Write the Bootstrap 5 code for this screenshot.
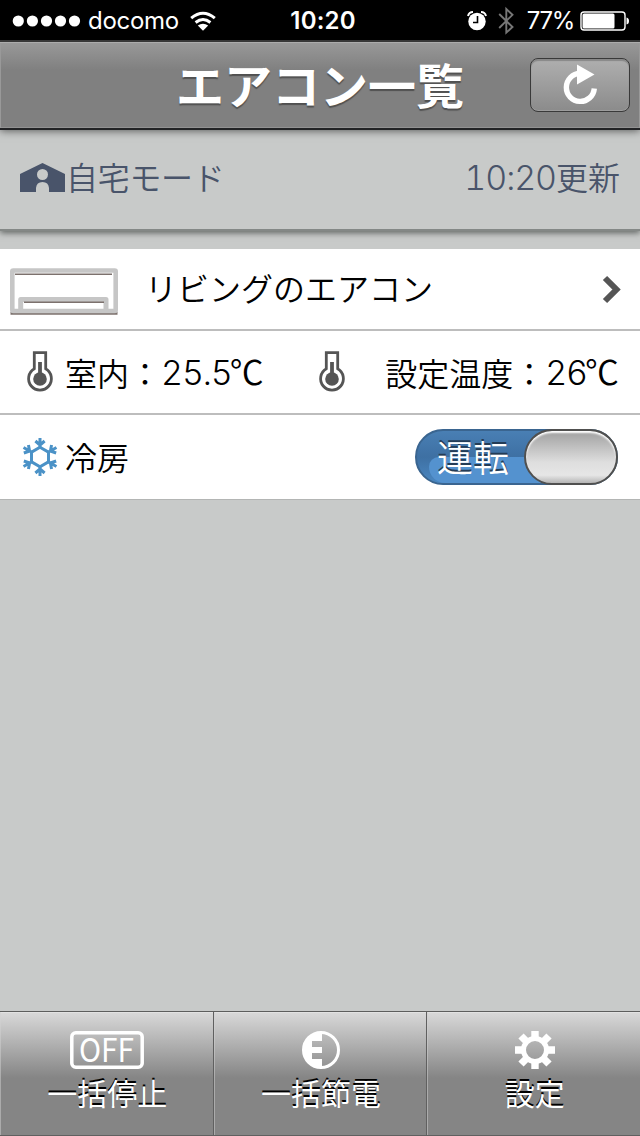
<!DOCTYPE html>
<html lang="ja">
<head>
<meta charset="utf-8">
<meta name="viewport" content="width=device-width, initial-scale=1">
<title>エアコン一覧</title>
<link href="https://cdn.jsdelivr.net/npm/bootstrap@5.3.0/dist/css/bootstrap.min.css" rel="stylesheet">
<style>
body{font-family:"Noto Sans CJK JP",sans-serif;font-size:32px;line-height:1;font-weight:350;background:#c8cac9;color:#000;height:1136px;overflow:hidden}
svg{display:block;flex:none;overflow:visible}
.status{height:40px;background:#000;color:#fff;font-family:Inter,sans-serif;font-size:24px;font-weight:400;display:grid;grid-template-columns:1fr auto 1fr;padding:1px 11px 0 12px}
.clock{font-weight:600;letter-spacing:.2px;padding-left:5px}
.titlebar{height:90px;border-top:2px solid #373737;border-bottom:2px solid #222325;background:linear-gradient(#999,#808080 28px);box-shadow:inset 0 1px #acacac,inset 1px 0 #999,inset -1px 0 #999,inset 0 -1px #929292,0 1px 8px rgba(0,0,0,.55);color:#fff;display:grid;grid-template-columns:110px 1fr 110px;position:relative}
.titlebar h1{font-size:48px;font-weight:700;line-height:1;text-shadow:0 2px 1px #505050;white-space:nowrap;padding-bottom:5px}
.reload{width:100px;height:54px;border:1px solid #393939;border-radius:8px;background:linear-gradient(#afafaf,#8b8b8b);box-shadow:inset 0 2px 1px #888,inset 0 -1px #9c9c9c;padding:0}
.mode{height:101px;color:#49546a;border-bottom:2px solid #848886;box-shadow:0 2px 6px rgba(70,75,72,.8);padding:0 20px 4px}
.jp{padding-bottom:4px}
.r2 .jp{padding-bottom:1px}
.latin{font-family:Inter,sans-serif;font-size:34px;font-weight:300;font-feature-settings:"tnum";letter-spacing:-1.1px;padding-top:1px}
.deg{font-size:34px;padding-bottom:3px;margin-left:-2px;margin-right:-2px}
.device{margin-top:18px;background:#fff;border-bottom:1px solid #b3b5b4}
.line{border-bottom:2px solid #bdbdbd}
.r1{height:82px;padding:0 19px 0 10px}
.r2{height:84px;padding:0 23px 0 26px}
.r3{height:84px;padding:0 22px}
.toggle{width:203px;height:56px;border-radius:28px;border:2px solid #3a6590;background:linear-gradient(#497fb4,#3e70a3 50%,#4a87c1);color:#fff;position:relative}
.shine{position:absolute;left:12px;right:40px;top:26px;bottom:0;border-radius:15px 0 0 25px;background:#5492cf}
.toggle b{position:absolute;left:20px;top:7px;font-size:36px;line-height:1;font-weight:350;text-shadow:0 -2px #243c56}
.knob{position:absolute;right:-2px;top:-2px;width:94px;height:56px;border:2px solid #50504f;border-radius:28px;background:linear-gradient(#a0a0a0,#dedede 60%,#e6e6e6 85%,#b5b5b5);box-shadow:inset 0 2px 2px #fff}
.tabs{height:125px;border-top:1px solid #5d5e5d;border-bottom:1px solid #606060;background:linear-gradient(#d9d9d9,#858585 66px)}
.tab-i{padding:19px 0 0 2px;color:#fff;font-size:30px;font-weight:400;text-shadow:0 -2px #000;box-shadow:inset 1px 0 rgba(210,210,210,.5),inset 0 1px #e2e2e2}
.tab-i+.tab-i{border-left:1px solid #606060}
.tab-i svg{margin-bottom:8px}
</style>
</head>
<body class="d-flex flex-column">
<div class="status align-items-center">
  <div class="d-flex align-items-center">
    <svg width="70" height="12"><g fill="#fff"><circle cx="6.3" cy="6" r="5.6"/><circle cx="20.4" cy="6" r="5.6"/><circle cx="34.5" cy="6" r="5.6"/><circle cx="48.5" cy="6" r="5.6"/><circle cx="62.5" cy="6" r="5.6"/></g></svg>
    <span style="margin-left:6px;letter-spacing:-.3px">docomo</span>
    <svg style="margin-left:10px" width="28" height="22" viewBox="0 0 28 22" fill="none" stroke="#fff" stroke-width="3"><path d="M2.2 8.2Q14-1.8 25.8 8.2M6.6 12.5Q14 6.6 21.4 12.5"/><path d="M8.8 15.5Q14 11.8 19.2 15.5L14 20.7Z" fill="#fff" stroke="none"/></svg>
  </div>
  <div class="clock">10:20</div>
  <div class="d-flex align-items-center justify-content-end">
    <svg width="20" height="22" viewBox="0 0 20 22"><circle cx="10" cy="11.5" r="8.7" fill="#fff"/><path d="M1 6Q2 2 6 2M14 2Q18 2 19 6" fill="none" stroke="#fff" stroke-width="2"/><path d="M10.5 6v6.5H6" fill="none" stroke="#000" stroke-width="1.6"/></svg>
    <svg style="margin-left:11px" width="17" height="28" viewBox="0 0 17 28" fill="none" stroke="#777" stroke-width="1.9"><path d="M1.2 7L14.5 20 8.3 25.7V2L14.5 7.8 1.2 21"/></svg>
    <span style="margin-left:12px;letter-spacing:-1.3px">77%</span>
    <svg style="margin-left:6px" width="49" height="20" viewBox="0 0 49 20"><rect x="1" y="1" width="44" height="18" rx="3" fill="none" stroke="#fff" stroke-width="1.4"/><rect x="2.5" y="2.5" width="32" height="15" rx="1.5" fill="#fff"/><path d="M46.5 6.5q2.5 .5 2.5 3.5t-2.5 3.5Z" fill="#fff"/></svg>
  </div>
</div>
<header class="titlebar align-items-center">
  <span></span>
  <h1 class="m-0 text-center">エアコン一覧</h1>
  <button class="reload d-flex align-items-center justify-content-center" aria-label="更新"><svg width="36" height="42" viewBox="0 0 36 42"><path d="M18 9.4A14 14 0 1 0 32.3 24.5" fill="none" stroke="#fff" stroke-width="5.4"/><path d="M15 .5L32.5 10.5 15 20.5Z" fill="#fff"/></svg></button>
</header>
<div class="mode d-flex align-items-center justify-content-between">
  <div class="d-flex align-items-center"><svg width="45" height="29" viewBox="0 0 45 29"><path d="M0 11L22.5 0 45 11V29H29V25Q28.5 19 22.5 19T16 25V29H0Z" fill="currentColor"/><circle cx="22.5" cy="11.5" r="5.5" fill="#c8cac9"/></svg><span class="jp" style="margin-left:1px;letter-spacing:-.3px">自宅モード</span></div>
  <div class="d-flex align-items-center"><span class="latin">10:20</span><span class="jp">更新</span></div>
</div>
<main class="device">
  <div class="line r1 d-flex align-items-center">
    <svg style="margin-top:5px" width="108" height="48" viewBox="0 0 108 48"><path d="M.5 45.2H107.5" stroke="#7c716d" stroke-width="3"/><rect x="2.3" y="2.5" width="103.4" height="40.5" rx="1" fill="#fff" stroke="#c6c6c6" stroke-width="4.6"/><path d="M5 6.2H102" stroke="#7c716d" stroke-width="1.6"/><path d="M10.7 43V31.5H96V43" fill="none" stroke="#c6c6c6" stroke-width="5" stroke-linejoin="round"/><path d="M14 34.3H94" stroke="#7c716d" stroke-width="1.6"/></svg>
    <span class="jp" style="margin-left:27px">リビングのエアコン</span>
    <svg class="ms-auto" width="19" height="27" viewBox="0 0 19 27"><path d="M3 2L14.5 13.5 3 25" fill="none" stroke="#555" stroke-width="6"/></svg>
  </div>
  <div class="line r2 d-flex align-items-center">
    <svg width="28" height="42" viewBox="0 0 28 42"><path d="M8.3 1.6H19.7V17.8A11.4 11.4 0 1 1 8.3 17.8Z" fill="#fff" stroke="#555" stroke-width="2.8"/><circle cx="14" cy="28" r="6.8" fill="#555"/><path d="M14 11V28" stroke="#555" stroke-width="3.8"/></svg>
    <span class="jp" style="margin-left:11px">室内：</span><span class="latin">25.5</span><span class="deg">℃</span>
    <svg style="margin-left:56px" width="28" height="42" viewBox="0 0 28 42"><path d="M8.3 1.6H19.7V17.8A11.4 11.4 0 1 1 8.3 17.8Z" fill="#fff" stroke="#555" stroke-width="2.8"/><circle cx="14" cy="28" r="6.8" fill="#555"/><path d="M14 11V28" stroke="#555" stroke-width="3.8"/></svg>
    <span class="jp ms-auto">設定温度：</span><span class="latin">26</span><span class="deg">℃</span>
  </div>
  <div class="r3 d-flex align-items-center">
    <svg width="36" height="40" viewBox="-18 -20 36 40" fill="none" stroke="#4b92c7" stroke-width="3"><defs><path id="arm" d="M0-9V-19M0-12L-4.6-16M0-12L4.6-16"/></defs><path d="M0-9.8L8.5-4.9V4.9L0 9.8-8.5 4.9V-4.9Z"/><use href="#arm"/><use href="#arm" transform="rotate(60)"/><use href="#arm" transform="rotate(120)"/><use href="#arm" transform="rotate(180)"/><use href="#arm" transform="rotate(240)"/><use href="#arm" transform="rotate(300)"/></svg>
    <span class="jp" style="margin-left:7px;padding-bottom:2px">冷房</span>
    <div class="toggle ms-auto"><div class="shine"></div><b>運転</b><div class="knob"></div></div>
  </div>
</main>
<footer class="tabs row g-0 mt-auto text-center">
  <div class="col tab-i d-flex flex-column align-items-center">
    <svg width="74" height="38" viewBox="0 0 74 38"><rect x="1.8" y="1.8" width="70.4" height="34.4" rx="4" fill="none" stroke="#fff" stroke-width="3.5"/><text x="9" y="31" font-size="33" textLength="55" lengthAdjust="spacingAndGlyphs" fill="#fff" style="text-shadow:none">OFF</text></svg>
    <span>一括停止</span>
  </div>
  <div class="col tab-i d-flex flex-column align-items-center">
    <svg width="38" height="38" viewBox="0 0 38 38"><circle cx="19" cy="19" r="17.5" fill="none" stroke="#fff" stroke-width="3"/><path d="M20 1A18 18 0 0 0 20 37V28H10V22H20V16H10V10H20Z" fill="#fff"/></svg>
    <span>一括節電</span>
  </div>
  <div class="col tab-i d-flex flex-column align-items-center">
    <svg width="40" height="38" viewBox="-20 -19 40 38" fill="none" stroke="#fff"><circle r="11.5" stroke-width="5"/><path d="M0-12V-19M0 12V19M-12 0H-20M12 0H20M-9-9L-14-14M9-9L14-14M-9 9L-14 14M9 9L14 14" stroke-width="7.4"/></svg>
    <span>設定</span>
  </div>
</footer>
</body>
</html>
